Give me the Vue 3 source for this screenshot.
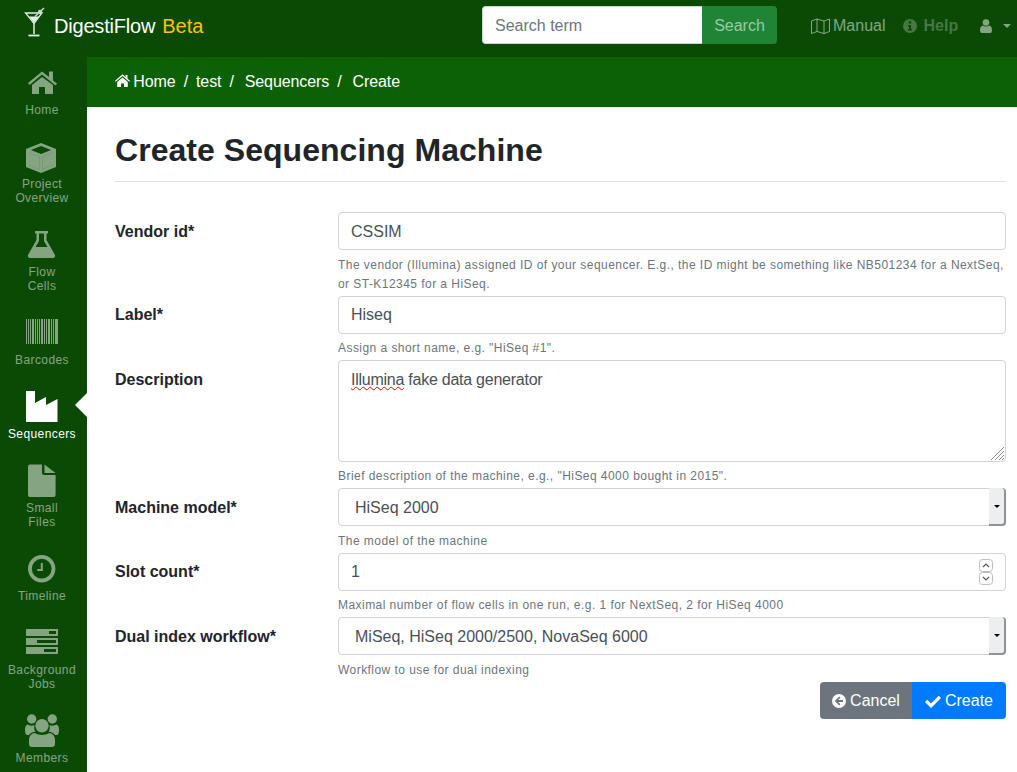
<script setup>
import { ref } from 'vue'

const vendor = ref('CSSIM')
const label = ref('Hiseq')
const model = ref('HiSeq 2000')
const slots = ref('1')
const workflow = ref('MiSeq, HiSeq 2000/2500, NovaSeq 6000')

// barcode icon stripes, [x, width]
const stripes = [[2, 1], [4, 1], [6, 1], [8, 2], [11, 1], [13, 1], [15, 1], [17, 2], [20, 1], [22, 1], [24, 2], [27, 1], [29, 1], [31, 2], [33, 1]]
const barcode = stripes.map(([x, w]) => `M${x} 5h${w}v25h-${w}z`).join('')

const navItems = [
  { lines: ['Home'], parts: [
    { d: 'M4 19L18 7.5l7 5.5V7.5h4v9l4 3-1.5 2L18 10.5 5.5 21z' },
    { d: 'M8 21l10-8 11 8v9h-8v-7h-6v7H8z' },
  ] },
  { lines: ['Project', 'Overview'], parts: [
    { d: 'M17 5l15 6v18l-15 6-15-6V11zM17 8L7 12l10 4 10-4zM5 14.500V27l10.500 4.500V19zM29 14.500L18.500 19v12.500L29 27z' },
    { d: 'M5 14.500V27l10.500 4.500V19z' },
    { d: 'M29 14.500L18.500 19v12.500L29 27z' },
  ] },
  { lines: ['Flow', 'Cells'], parts: [
    { d: 'M11 5h13v2.500h-1.500V14L31 29q.5 3-2 3H6q-2.500 0-2-3l8.500-15V7.500H11zM15 7.500V15l-3.500 6h12L20 15V7.500z' },
  ] },
  { lines: ['Barcodes'], parts: [{ d: barcode }] },
  { lines: ['Sequencers'], active: true, parts: [
    { d: 'M2 3h9v12l11-6v8l11.500-6v23H2z' },
  ] },
  { lines: ['Small', 'Files'], parts: [
    { d: 'M6 2.500h12V11q0 2 2 2h11.600v20q0 2-2 2H6q-2 0-2-2V4.500q0-2 2-2z' },
    { d: 'M20.500 2.500l11 8.500h-11z' },
  ] },
  { lines: ['Timeline'], parts: [
    { d: 'M17.700 5a13.700 13.700 0 1 0 0 27.400 13.700 13.700 0 0 0 0-27.400zm0 3.800a9.900 9.900 0 1 1 0 19.800 9.900 9.900 0 0 1 0-19.800zM16.800 13h2v8h-5.500v-2h3.500z' },
  ] },
  { lines: ['Background', 'Jobs'], parts: [
    { d: 'M2 5h32v7H2zM25 7v3h7V7z' },
    { d: 'M2 14h32v7H2zM13 16v3h19v-3z' },
    { d: 'M2 23h32v7H2zM20 25v3h12v-3z' },
  ] },
  { lines: ['Members'], parts: [
    { d: 'M7.700 2.300a4.700 4.700 0 1 1 0 9.400 4.700 4.700 0 0 1 0-9.400zM28.300 2.300a4.700 4.700 0 1 1 0 9.400 4.700 4.700 0 0 1 0-9.400z' },
    { d: 'M3 12.500Q7 14.500 10.500 13 9.500 17 11.500 19.500 7 20 5 23H3Q1 22.500 1 18 1 14 3 12.500z' },
    { d: 'M33 12.500Q29 14.500 25.500 13 26.500 17 24.500 19.500 29 20 31 23H33Q35 22.500 35 18 35 14 33 12.500z' },
    { d: 'M18 7a6.700 6.700 0 1 1 0 13.400 6.700 6.700 0 0 1 0-13.400z' },
    { d: 'M10.500 21Q14 23 18 23T25.500 21Q31 22 31 28.500V32Q31 35 28 35H8Q5 35 5 32V28.500Q5 22 10.500 21z' },
  ] },
]
</script>

<template>
  <div class="page">
    <header class="topbar">
      <a class="brand" href="#">
        <svg class="logo" viewBox="0 0 24 32" width="24" height="32" aria-hidden="true">
          <path d="M1.500 6h16.500L10 16.500z" fill="none" stroke="#e6ede6" stroke-width="1.300" />
          <path d="M5 9.500h10L10 15.500z" fill="#e6ede6" />
          <path d="M10 16v11" stroke="#e6ede6" stroke-width="1.500" />
          <path d="M4.500 28.500h11" stroke="#e6ede6" stroke-width="1.800" />
          <path d="M11 9.500L20 1" stroke="#c9d6c9" stroke-width="1.500" />
          <circle cx="16" cy="5" r="2.200" fill="#c9d6c9" />
        </svg>
        <span class="brand-name">DigestiFlow</span>
        <span class="beta">Beta</span>
      </a>
      <form class="search" @submit.prevent>
        <input type="text" placeholder="Search term" />
        <button type="submit">Search</button>
      </form>
      <nav class="toplinks">
        <a class="toplink" href="#">
          <svg viewBox="0 0 19 16" width="19" height="16" aria-hidden="true">
            <path d="M.5 3L6 1l7 2 5.500-2v12.500L13 15.500l-7-2-5.500 2zM6 1v12.500M13 3v12.500" fill="none" stroke="currentColor" stroke-width="1" />
          </svg>
          Manual
        </a>
        <a class="toplink help" href="#">
          <svg viewBox="0 0 14 14" width="14" height="14" aria-hidden="true">
            <path fill-rule="evenodd" fill="currentColor" d="M7 0a7 7 0 1 1 0 14A7 7 0 0 1 7 0zM5.800 2.300v2.200h2.400V2.300zM5 6v1.500h1V10H5v1.500h4V10H8V6z" />
          </svg>
          Help
        </a>
        <a class="toplink user" href="#">
          <svg viewBox="0 0 12 14" width="12" height="14" aria-hidden="true">
            <circle cx="6" cy="3.500" r="3.300" fill="currentColor" />
            <path fill="currentColor" d="M2.500 6.500Q6 8.500 9.500 6.500 12 7.500 12 11.500q0 2.500-2 2.500H2q-2 0-2-2.500 0-4 2.500-5z" />
          </svg>
          <i class="caret"></i>
        </a>
      </nav>
    </header>

    <div class="body">
      <aside class="sidebar">
        <a
          v-for="item in navItems"
          :key="item.lines[0]"
          class="nav-item"
          :class="{ active: item.active }"
          href="#"
        >
          <svg class="nav-icon" viewBox="0 0 36 36" width="36" height="36" aria-hidden="true">
            <path v-for="p in item.parts" :key="p.d" :d="p.d" fill="currentColor" fill-rule="evenodd" />
          </svg>
          <span v-for="line in item.lines" :key="line" class="nav-label">{{ line }}</span>
        </a>
      </aside>

      <main class="main">
        <ol class="crumbs">
          <li>
            <svg viewBox="0 0 15 13" width="15" height="13" aria-hidden="true">
              <path fill="currentColor" d="M0 6.800L7.500.3l3 2.600V1h2v3.700l2.500 2.100-.8 1L7.500 2 .8 7.800z" />
              <path fill="currentColor" d="M2.200 8L7.500 3.400 12.800 8v5H9V9.500H6V13H2.200z" />
            </svg>
            Home
          </li>
          <li class="sep">/</li>
          <li>test</li>
          <li class="sep wide">/</li>
          <li>Sequencers</li>
          <li class="sep wide">/</li>
          <li>Create</li>
        </ol>

        <div class="content">
          <h1>Create Sequencing Machine</h1>

          <form class="form" @submit.prevent>
            <div class="row">
              <label for="vendor">Vendor id*</label>
              <div class="field">
                <input id="vendor" v-model="vendor" class="control" type="text" />
                <small>The vendor (Illumina) assigned ID of your sequencer. E.g., the ID might be something like NB501234 for a NextSeq, or ST-K12345 for a HiSeq.</small>
              </div>
            </div>
            <div class="row">
              <label for="label">Label*</label>
              <div class="field">
                <input id="label" v-model="label" class="control" type="text" />
                <small>Assign a short name, e.g. "HiSeq #1".</small>
              </div>
            </div>
            <div class="row">
              <label>Description</label>
              <div class="field">
                <div class="select-wrap">
                  <div class="control textarea"><span class="misspelt">Illumina</span> fake data generator</div>
                  <svg class="grip" viewBox="0 0 15 15" width="15" height="15" aria-hidden="true">
                    <path d="M1 14L14 1M5 14L14 5M9 14l5-5M12 14l2-2" stroke="#8a8a8a" stroke-width="1" fill="none" />
                  </svg>
                </div>
                <small>Brief description of the machine, e.g., "HiSeq 4000 bought in 2015".</small>
              </div>
            </div>
            <div class="row">
              <label for="model">Machine model*</label>
              <div class="field">
                <div class="select-wrap">
                  <select id="model" v-model="model" class="control select">
                    <option>HiSeq 2000</option>
                    <option>HiSeq 4000</option>
                    <option>NextSeq 500</option>
                  </select>
                  <span class="select-btn"><i></i></span>
                </div>
                <small>The model of the machine</small>
              </div>
            </div>
            <div class="row">
              <label for="slots">Slot count*</label>
              <div class="field">
                <div class="select-wrap">
                  <input id="slots" v-model="slots" class="control" type="text" />
                  <span class="spin">
                    <svg viewBox="0 0 14 13" width="14" height="13" aria-hidden="true">
                      <rect x=".5" y=".5" width="13" height="12" rx="3" fill="#fff" stroke="#b9bdc1" />
                      <path d="M4 8l3-3 3 3" fill="none" stroke="#555" stroke-width="1.200" />
                    </svg>
                    <svg viewBox="0 0 14 13" width="14" height="13" aria-hidden="true">
                      <rect x=".5" y=".5" width="13" height="12" rx="3" fill="#fff" stroke="#b9bdc1" />
                      <path d="M4 5l3 3 3-3" fill="none" stroke="#555" stroke-width="1.200" />
                    </svg>
                  </span>
                </div>
                <small>Maximal number of flow cells in one run, e.g. 1 for NextSeq, 2 for HiSeq 4000</small>
              </div>
            </div>
            <div class="row">
              <label for="workflow">Dual index workflow*</label>
              <div class="field">
                <div class="select-wrap">
                  <select id="workflow" v-model="workflow" class="control select">
                    <option>MiSeq, HiSeq 2000/2500, NovaSeq 6000</option>
                    <option>iSeq, MiniSeq, NextSeq, HiSeq 3000/4000</option>
                  </select>
                  <span class="select-btn"><i></i></span>
                </div>
                <small>Workflow to use for dual indexing</small>
              </div>
            </div>

            <div class="actions">
              <button type="button" class="btn cancel">
                <svg viewBox="0 0 14 14" width="14" height="14" aria-hidden="true">
                  <path fill="currentColor" fill-rule="evenodd" d="M7 0a7 7 0 1 1 0 14A7 7 0 0 1 7 0zM7.200 2.600L2.800 7l4.400 4.400 1.200-1.200L6.100 8H11V6H6.100l2.300-2.200z" />
                </svg>
                Cancel
              </button>
              <button type="submit" class="btn create">
                <svg viewBox="0 0 16 13" width="16" height="13" aria-hidden="true">
                  <path fill="currentColor" d="M0 7l2.300-2.300L6 8.400 13.700.7 16 3 6 13z" />
                </svg>
                Create
              </button>
            </div>
          </form>
        </div>
      </main>
    </div>
  </div>
</template>

<style>
html,
body {
  margin: 0;
  overflow: hidden;
}
</style>

<style scoped>
.page {
  height: 772px;
  overflow: hidden;
  display: flex;
  flex-direction: column;
  font-family: "Liberation Sans", Arial, sans-serif;
  font-size: 16px;
  color: #212529;
  background: #fff;
}

a {
  text-decoration: none;
  color: inherit;
}

.topbar {
  height: 57px;
  flex: none;
  display: flex;
  align-items: center;
  background: #0a4a05;
  box-sizing: border-box;
}

.brand {
  display: flex;
  align-items: center;
  margin-left: 24px;
  padding-bottom: 4px;
  width: 458px;
  font-size: 20px;
  color: #fff;
}

.logo {
  margin-right: 6px;
  margin-top: -7px;
}

.brand-name {
  letter-spacing: -0.2px;
}

.beta {
  margin-left: 7px;
  color: #ffc107;
}

.search {
  display: flex;
  margin-top: -7px;
}

.search input {
  width: 220px;
  height: 38px;
  box-sizing: border-box;
  padding: 2px 12px 0;
  border: 1px solid #ced4da;
  border-right: 0;
  border-radius: 4px 0 0 4px;
  font: inherit;
  font-size: 16px;
  color: #495057;
  outline: none;
}

.search input::placeholder {
  color: #6c757d;
  opacity: 1;
}

.search button {
  width: 75px;
  height: 38px;
  padding: 2px 0 0;
  border: 0;
  border-radius: 0 4px 4px 0;
  background: #1f8535;
  color: #9bc9a5;
  font: inherit;
  font-size: 16px;
}

.toplinks {
  display: flex;
  align-items: center;
  margin-left: 34px;
  margin-top: -5px;
}

.toplink {
  display: flex;
  align-items: center;
  gap: 3px;
  color: rgba(255, 255, 255, 0.5);
}

.help {
  margin-left: 18px;
  gap: 6px;
  font-weight: 700;
  color: rgba(255, 255, 255, 0.25);
}

.user {
  margin-left: 22px;
  gap: 11px;
}

.caret {
  width: 0;
  height: 0;
  border: 4.500px solid transparent;
  border-top-color: rgba(255, 255, 255, 0.5);
  border-bottom: 0;
}

.body {
  flex: 1;
  display: flex;
  min-height: 0;
}

.sidebar {
  width: 87px;
  flex: none;
  background: #0a4a05;
}

.nav-item {
  position: relative;
  display: flex;
  flex-direction: column;
  align-items: center;
  padding: 7px 3px 14px 0;
  color: rgba(255, 255, 255, 0.5);
}

.nav-icon {
  margin-bottom: 3px;
  display: block;
}

.nav-label {
  font-size: 12px;
  line-height: 14px;
  letter-spacing: 0.4px;
}

.nav-item.active {
  color: #fff;
}

.nav-item.active::after {
  content: "";
  position: absolute;
  right: 0;
  top: 12px;
  border: 12px solid transparent;
  border-right-color: #fff;
  border-left: 0;
}

.main {
  flex: 1;
  min-width: 0;
}

.crumbs {
  height: 50px;
  box-sizing: border-box;
  margin: 0;
  padding: 0 0 0 28px;
  list-style: none;
  display: flex;
  align-items: center;
  background: #0c6105;
  color: #fff;
  letter-spacing: -0.1px;
}

.crumbs li svg {
  margin-right: -1px;
}

.sep {
  padding: 0 8px;
}

.sep.wide {
  padding: 0 11px 0 8px;
}

.content {
  padding: 0 11px 0 28px;
}

h1 {
  margin: 0 0 30px;
  padding: 24px 0 12px;
  border-bottom: 1px solid #dee2e6;
  font-size: 32px;
  line-height: 38px;
  font-weight: 700;
  letter-spacing: 0.04px;
}

.row {
  display: flex;
  margin-bottom: 1.700px;
}

.row label {
  width: 223px;
  flex: none;
  padding-top: 7.600px;
  line-height: 24px;
  font-weight: 700;
}

.field {
  flex: 1;
  min-width: 0;
}

.control {
  display: block;
  width: 100%;
  height: 38px;
  box-sizing: border-box;
  padding: 1px 12px 0;
  border: 1px solid #ced4da;
  border-radius: 4px;
  background: #fff;
  font: inherit;
  font-size: 16px;
  color: #495057;
  outline: none;
}

.textarea {
  height: 102px;
  padding-top: 7px;
  line-height: 24px;
  letter-spacing: -0.25px;
}

.misspelt {
  text-decoration: underline wavy #e00;
  text-decoration-thickness: 1px;
}

.grip {
  position: absolute;
  right: 1px;
  bottom: 1px;
}

small {
  display: block;
  margin-top: 5.500px;
  font-size: 12px;
  line-height: 19.200px;
  letter-spacing: 0.45px;
  color: #6c757d;
}

.select-wrap {
  position: relative;
}

.select {
  appearance: none;
  padding: 0 12px 0 16px;
}

.select-btn {
  position: absolute;
  top: 0;
  right: 0;
  width: 17px;
  height: 38px;
  box-sizing: border-box;
  display: flex;
  align-items: center;
  justify-content: center;
  background: #eceef0;
  border-right: 2px solid #8f9396;
  border-bottom: 2px solid #8f9396;
  border-radius: 0 4px 4px 0;
}

.select-btn i {
  width: 0;
  height: 0;
  border: 3px solid transparent;
  border-top: 3px solid #000;
  border-bottom: 0;
}

.spin {
  position: absolute;
  top: 6px;
  right: 13px;
  display: flex;
  flex-direction: column;
}

.actions {
  display: flex;
  justify-content: flex-end;
}

.btn {
  display: flex;
  align-items: center;
  justify-content: center;
  gap: 4px;
  height: 37px;
  padding: 2px 0 0;
  border: 0;
  color: #fff;
  font: inherit;
  font-size: 16px;
}

.cancel {
  width: 92px;
  background: #6c757d;
  border-radius: 4px 0 0 4px;
}

.create {
  width: 94px;
  background: #007bff;
  border-radius: 0 4px 4px 0;
}
</style>
